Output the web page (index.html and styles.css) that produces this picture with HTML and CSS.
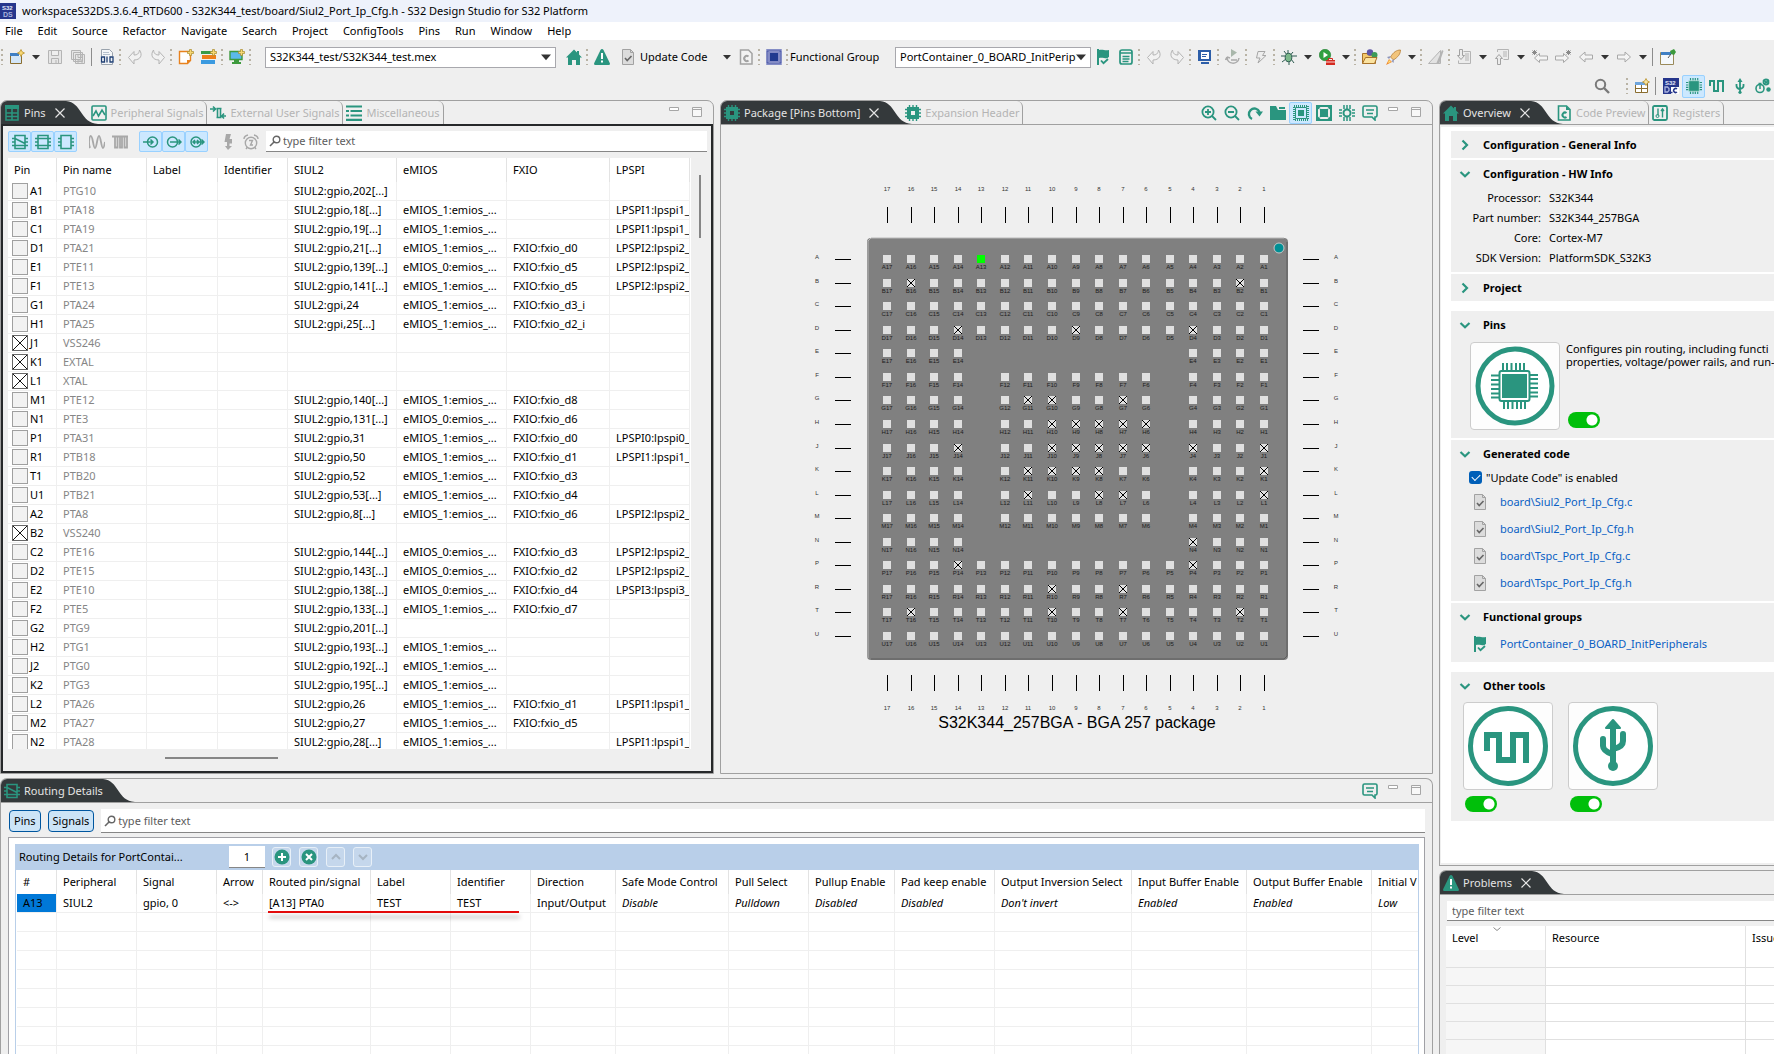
FILE: index.html
```html
<!DOCTYPE html>
<html lang="en">
<head>
<meta charset="utf-8">
<title>S32 Design Studio for S32 Platform</title>
<link rel="stylesheet" href="styles.css">
</head>
<body>
<svg class="defs" aria-hidden="true">
  <symbol id="new" viewBox="0 0 16 16"><path fill="#fff" stroke="#8a6d2f" d="M1.500 4.500h11v10h-11z"/><path fill="#3f7fc4" d="M1 4h9v3H1z"/><path fill="#d3e6f8" d="M2 7h10v7H2z"/><path fill="#f7d774" stroke="#b8902c" stroke-width=".8" d="M12 .5l1.200 2.300 2.300 1.200-2.300 1.200L12 7.500l-1.200-2.300L8.500 4l2.300-1.200z"/></symbol>
  <symbol id="save" viewBox="0 0 16 16"><path fill="#e6e6e6" stroke="#b4b4b4" d="M1.500 1.500h13v13h-13zM4.500 1.500v5h7v-5M4.500 14.500v-5h7v5M9 11v3"/></symbol>
  <symbol id="saveall" viewBox="0 0 16 16"><path fill="#e6e6e6" stroke="#b4b4b4" d="M1.500 1.500h9v9h-9zM3.500 3.500h9v9h-9zM5.500 5.500h9v9h-9zM8 5.500v3h4v-3M8 14v-3h4v3"/></symbol>
  <symbol id="bin" viewBox="0 0 16 16"><path fill="#f4f6f8" stroke="#9aa3ad" d="M2.500 .5h8l3 3v12h-11z"/><path stroke="#b5c0cc" d="M4 3.500h6M4 5.500h7"/><path fill="#f4f6f8" d="M1 7h14v7H1z"/><path fill="none" stroke="#1f3f73" stroke-width="1.300" d="M2.500 8h3v5h-3zM8 7.500v6M11 8h3v5h-3z"/></symbol>
  <symbol id="undo" viewBox="0 0 16 16"><path fill="#f2f2f2" stroke="#b4b4b4" d="M1.500 8.500l5.500-6v3.500c3 0 5-1 5.500-5 3.500 5 1 10-5.500 10v4z"/></symbol>
  <symbol id="redo" viewBox="0 0 16 16"><path fill="#f2f2f2" stroke="#b4b4b4" d="M14.500 8.500l-5.500-6v3.500c-3 0-5-1-5.500-5-3.500 5-1 10 5.500 10v4z"/></symbol>
  <symbol id="newfile" viewBox="0 0 16 16"><path fill="#fff" stroke="#e8821e" stroke-width="1.400" d="M1.500 2.500h11v9l-3 3h-8z"/><path fill="#e8821e" d="M9 15v-4h4z"/><path fill="#f7d774" stroke="#a88a2c" stroke-width=".7" d="M11.500 .5h2v2h2v2h-2v2h-2v-2h-2v-2h2z"/></symbol>
  <symbol id="stack" viewBox="0 0 16 16"><path fill="#3a9a48" d="M0 2h13v3H0z"/><path fill="#ee7d1a" d="M1 6h14v4H1z"/><path fill="#3b9ae0" d="M0 11h14v4H0z"/><path fill="#f7d774" stroke="#a88a2c" stroke-width=".7" d="M11.500 .5h2v2h2v2h-2v2h-2v-2h-2v-2h2z"/></symbol>
  <symbol id="screen" viewBox="0 0 16 16"><path fill="#5bb9ea" stroke="#3d9a3d" stroke-width="1.400" d="M1 2.500h12v8H1z"/><path fill="#3d9a3d" d="M5 11h5v2h2v2H3v-2h2z"/><path fill="#f7d774" stroke="#a88a2c" stroke-width=".7" d="M11.500 .5h2v2h2v2h-2v2h-2v-2h-2v-2h2z"/></symbol>
  <symbol id="home" viewBox="0 0 16 16"><path fill="#2a957f" d="M8 .5l3 3V2h2v3.500L16 8.500H14V16h-4v-5H6v5H2V8.500H0z"/></symbol>
  <symbol id="warn" viewBox="0 0 16 16"><path fill="#2a957f" d="M8 0q1 0 1.600 1.200L16 14.500q0 1.500-1.300 1.500H1.300Q0 16 0 14.500L6.400 1.200Q7 0 8 0z"/><path fill="#fff" d="M7 4h2v6H7zM7 11.500h2v2H7z"/></symbol>
  <symbol id="doccheck" viewBox="0 0 16 16"><path fill="#dcdcdc" stroke="#a2a2a2" d="M2.500 .5h8l3 3v12h-11z"/><path fill="none" stroke="#a2a2a2" d="M10.500 .5v3h3"/><path fill="none" stroke="#666" stroke-width="1.600" d="M5 9l2.200 2.500L11.500 7"/></symbol>
  <symbol id="docc" viewBox="0 0 16 16"><path fill="#f2f2f2" stroke="#a2a2a2" stroke-width="1.500" d="M2.500 1h8l3.500 3.500V15H2.500z"/><path fill="none" stroke="#a2a2a2" stroke-width="2" d="M10.500 7.500a2.600 2.600 0 1 0 0 4"/></symbol>
  <symbol id="cfile" viewBox="0 0 16 16"><path fill="none" stroke="#2a957f" stroke-width="1.600" d="M2.500 1h8L14 4.500V15H2.500z"/><path fill="#2a957f" d="M10 1v4h4z"/><path fill="none" stroke="#2a957f" stroke-width="2" d="M10.500 8a2.500 2.500 0 1 0 0 4"/></symbol>
  <symbol id="bluechip" viewBox="0 0 16 16"><path fill="#9da3d0" d="M0 0h16v16H0z"/><path fill="none" stroke="#3f4ca3" stroke-dasharray="1 1" stroke-width="2" d="M1.500 1.500h13v13h-13z"/><path fill="#8289c4" d="M3 3h10v10H3z"/><path fill="#213a8f" d="M4 4h8v8H4z"/></symbol>
  <symbol id="flag" viewBox="0 0 16 16"><path fill="#2a957f" d="M2 0h2v1c4-1 6 1 10 0v8c-4 1-6-1-10 0v7H2z"/><path fill="none" stroke="#efefef" stroke-width="3" d="M6 11l3 3 6-5"/><path fill="none" stroke="#2a957f" stroke-width="1.800" d="M6 11.500l2.500 2.700L13 10"/></symbol>
  <symbol id="db" viewBox="0 0 16 16"><path fill="none" stroke="#2a957f" stroke-width="1.700" d="M4 1h8q2 0 2 2v10q0 2-2 2H4q-2 0-2-2V3q0-2 2-2zM2 4h12M4.500 7.500h7M4.500 10h7M4.500 12.500h6"/></symbol>
  <symbol id="console" viewBox="0 0 16 16"><path fill="#2d5ea8" d="M1 1h13v11H1zM4 13h8v2H4z"/><path fill="#fff" d="M4 3h8v7H4z"/><path stroke="#2d5ea8" d="M5 5.500h5M5 7.500h4"/></symbol>
  <symbol id="refresh" viewBox="0 0 16 16"><path fill="#a9b7ab" d="M6 0l6 3.500L6 8z"/><path fill="none" stroke="#a9a9a9" stroke-width="1.500" d="M2 8c0 8 11 8 12 1M2 8L.5 11M2 8l3 1M6 11h6"/></symbol>
  <symbol id="flash" viewBox="0 0 16 16"><path fill="#eee" stroke="#a6a6a6" d="M5 2.500h7L9.500 6.500H13L5 14l2-5H3.500z"/></symbol>
  <symbol id="bug" viewBox="0 0 16 16"><path stroke="#2c5a50" d="M3 2l3 4M12 3L9.500 6M0 7h4M11 7h5M1 13l4-3M13 14l-3-4M7 1v4M8 12v4"/><ellipse cx="7.500" cy="8.500" rx="3.300" ry="4.200" fill="#7bb88a" stroke="#2c5a50"/></symbol>
  <symbol id="run" viewBox="0 0 16 16"><circle cx="6" cy="6" r="5.700" fill="#30a040" stroke="#1f7d2e" stroke-width=".6"/><path fill="#fff" d="M4.500 3l4.500 3-4.500 3z"/><path fill="#d42a20" d="M7 11h9v5H7z"/><path fill="none" stroke="#d42a20" d="M9.500 11V9.500h4V11"/><path stroke="#fff" stroke-width=".8" d="M7 13h9"/></symbol>
  <symbol id="folder" viewBox="0 0 16 16"><path fill="#f4c96b" stroke="#a8722a" d="M.5 4.500h5l1 1.500h7v8.500H.5z"/><circle cx="8" cy="3.500" r="3.200" fill="#5f56a8"/><circle cx="12.500" cy="6" r="3" fill="#3d9a58"/><path fill="#fbe3a0" stroke="#a8722a" d="M.5 14.500l3-6H15l-2.500 6z"/></symbol>
  <symbol id="rocket" viewBox="0 0 16 16"><path fill="#f2c57c" stroke="#b87d33" stroke-width=".8" d="M15.500 1c-4 0-7 2-10 7l3 3c4.500-3 7-6 7-10z"/><path fill="#8c94b8" d="M6 7L2 8l2 2zM9 10l-.5 4L6.500 12z"/><path fill="#f28a2a" d="M4 10l3 3-6 3z"/><path fill="#ffe27a" d="M4 11l2 2-3 1z"/></symbol>
  <symbol id="blade" viewBox="0 0 16 16"><path fill="#e2e2e2" stroke="#b4b4b4" d="M12.500 1.500v13h-12z"/><path fill="#b4b4b4" d="M14 1l1.500 1L11 15H8z"/></symbol>
  <symbol id="nextann" viewBox="0 0 16 16"><path fill="#ececec" stroke="#b4b4b4" d="M7.500 2.500h7v12h-12v-3M9 5h4M9 7h4M9 9h4M9 11h4"/><path fill="#ececec" stroke="#a2a2a2" d="M3.500 .5h3v6h2L5 10.500 1.500 6.500h2z"/></symbol>
  <symbol id="prevann" viewBox="0 0 16 16"><path fill="#ececec" stroke="#b4b4b4" d="M3.500 3V.5h11v10h-5M9 3h4M9 5h4M9 7h4"/><path fill="#ececec" stroke="#a2a2a2" d="M3.500 15.500h3v-6h2L5 5.500 1.500 9.500h2z"/></symbol>
  <symbol id="backstar" viewBox="0 0 16 16"><path fill="#f4f4f4" stroke="#a8a8a8" d="M2.500 9l5-4.500v2.500h8v4h-8v2.500z"/><path stroke="#8a8a8a" d="M0 3.500h5M2.500 1v5M.5 1.500l4 4M4.500 1.500l-4 4"/></symbol>
  <symbol id="fwdstar" viewBox="0 0 16 16"><path fill="#f4f4f4" stroke="#a8a8a8" d="M13.500 9l-5-4.500v2.500h-8v4h8v2.500z"/><path stroke="#8a8a8a" d="M11 3.500h5M13.500 1v5M11.500 1.500l4 4M15.500 1.500l-4 4"/></symbol>
  <symbol id="back" viewBox="0 0 16 16"><path fill="#f4f4f4" stroke="#a8a8a8" d="M1.500 8l5.500-5v3h7.500v4H7v3z"/></symbol>
  <symbol id="fwd" viewBox="0 0 16 16"><path fill="#f4f4f4" stroke="#a8a8a8" d="M14.500 8L9 3v3H1.500v4H9v3z"/></symbol>
  <symbol id="pinned" viewBox="0 0 16 16"><path fill="#f4f8fc" stroke="#9a8a5a" d="M.5 3.500h13v12H.5z"/><path fill="#3f7fc4" d="M1 3h10v3H1z"/><path fill="#3d9a3d" d="M10 2l4-2 2 3-2 3-3-1z"/><path stroke="#555" d="M11 5L8 9"/></symbol>
  <symbol id="search" viewBox="0 0 16 16"><circle cx="6.500" cy="6.500" r="4.700" fill="none" stroke="#7a7a7a" stroke-width="2"/><path stroke="#7a7a7a" stroke-width="2.400" d="M10 10l5 5"/></symbol>
  <symbol id="lens" viewBox="0 0 12 12"><circle cx="7.500" cy="4.500" r="3.300" fill="none" stroke="#666" stroke-width="1.400"/><path stroke="#666" stroke-width="1.600" d="M5 7L1 11"/></symbol>
  <symbol id="persp" viewBox="0 0 16 16"><path fill="#fff" stroke="#8a6d2f" d="M1.500 4.500h12v10h-12zM7.500 7v7M1.500 10.500h12"/><path fill="#6fa5dc" d="M1 4h10v3H1z"/><path fill="#f7e3a0" stroke="#b8902c" stroke-width=".8" d="M12 .5l1.200 2.300 2.300 1.200-2.300 1.200L12 7.500l-1.200-2.300L8.500 4l2.300-1.200z"/></symbol>
  <symbol id="s32" viewBox="0 0 16 16"><path fill="#26368c" d="M0 0h16v16H0z"/><text x="2" y="7" font-size="6" font-weight="700" fill="#e4e8fa" font-family="Liberation Sans">S32</text><text x="3" y="14" font-size="7" font-weight="700" fill="#a9b3de" font-family="Liberation Sans">DS</text></symbol>
  <symbol id="s32c" viewBox="0 0 16 16"><path fill="#26368c" d="M0 0h16v16H0z"/><text x="2" y="7" font-size="6" font-weight="700" fill="#e4e8fa" font-family="Liberation Sans">S32</text><path fill="none" stroke="#a9b3de" stroke-width="1.300" d="M2 9h2.500l1.500 1.500v2L4.500 14H2z"/><path fill="#fff" d="M8 9h8v7H8z"/><path fill="none" stroke="#26368c" stroke-width="1.500" d="M14 11a2 2 0 1 0 0 3M8 14.500h1.500"/></symbol>
  <symbol id="chip" viewBox="0 0 16 16"><path stroke="#2a957f" stroke-width="1.200" d="M4.500 0v16M7 0v16M9.300 0v16M11.700 0v16M0 4.500h16M0 7h16M0 9.300h16M0 11.700h16"/><path fill="#2a957f" stroke="#bfe3da" stroke-width=".8" d="M2.700 2.700h10.600v10.600H2.700z"/></symbol>
  <symbol id="chiphole" viewBox="0 0 16 16"><path stroke="#2a957f" stroke-width="1.400" d="M4.500 0v16M8 0v16M11.500 0v16M0 4.500h16M0 8h16M0 11.500h16"/><path fill="#2a957f" d="M2 2h12v12H2z"/><path fill="#efefef" d="M6 6h4v4H6z"/></symbol>
  <symbol id="chipdark" viewBox="0 0 16 16"><path stroke="#2a957f" stroke-width="1.400" d="M4.500 0v16M8 0v16M11.500 0v16M0 4.500h16M0 8h16M0 11.500h16"/><path fill="#2a957f" d="M2 2h12v12H2z"/><path fill="#34393b" d="M6 6h4v4H6z"/></symbol>
  <symbol id="wave" viewBox="0 0 16 16"><path fill="none" stroke="#2a957f" stroke-width="2" d="M1 8V3h4v10h4V3h5v11"/></symbol>
  <symbol id="usb" viewBox="0 0 16 16"><path fill="#2a957f" d="M8 0l2.500 4h-5z"/><path fill="none" stroke="#2a957f" stroke-width="1.800" d="M8 3v11M4.500 6v2q0 2 3.500 3.500M11.500 6v2q0 2-3.500 3"/><circle cx="8" cy="14.300" r="1.600" fill="#2a957f"/></symbol>
  <symbol id="gears" viewBox="0 0 16 16"><circle cx="5" cy="10.500" r="4" fill="none" stroke="#2a957f" stroke-width="1.600"/><circle cx="11" cy="4" r="2.500" fill="none" stroke="#2a957f" stroke-width="1.800"/><circle cx="13.500" cy="11.500" r="2.200" fill="#2a957f"/><path stroke="#2a957f" stroke-width="1.500" d="M5 7v4M3.500 5.500h3M8 2l6 4M14 2L9 6"/></symbol>
  <symbol id="grid" viewBox="0 0 16 16"><path fill="none" stroke="#2a957f" stroke-width="1.600" d="M2 1h12v14H2zM8 4v11M2 8h12M2 11.500h12"/><path fill="#2a957f" d="M1 0h14v4H1z"/></symbol>
  <symbol id="scope" viewBox="0 0 16 16"><rect x="1" y="1" width="14" height="14" rx="1" fill="none" stroke="#2a957f" stroke-width="1.600"/><path fill="none" stroke="#2a957f" stroke-width="1.600" d="M2 11l3-5 2.500 5L11 5l3 5"/></symbol>
  <symbol id="ext" viewBox="0 0 16 16"><path fill="none" stroke="#2a957f" stroke-width="1.600" d="M0 4h5M3 1.500L5.500 4 3 6.500M7.500 3v10M10.500 3v10M6.500 3.500h5M6.500 12.500h5M16 11h-4M14 8.500L11.800 11 14 13.500"/></symbol>
  <symbol id="list" viewBox="0 0 16 16"><path stroke="#2a957f" stroke-width="2.200" d="M0 1.500h16M0 6h3M4.500 6H16M0 10.500h3M4.500 10.500H16M0 14.800h16"/></symbol>
  <symbol id="route" viewBox="0 0 16 16"><path fill="none" stroke="#2a957f" stroke-width="1.600" d="M3 1.500h10v13H3zM0 4.500h3M0 8h3M0 11.500h3M13 4.500h3M13 8h3M13 11.500h3M3 4.500l10 5M3 11.500h10"/></symbol>
  <symbol id="route2" viewBox="0 0 16 16"><path fill="none" stroke="#2a957f" stroke-width="1.600" d="M3 1.500h10v13H3zM0 4.500h16M0 11.500h16M0 8h3M13 8h3"/></symbol>
  <symbol id="route3" viewBox="0 0 16 16"><path fill="none" stroke="#2a957f" stroke-width="1.600" d="M3 1.500h10v13H3zM0 4.500h3M0 8h3M0 11.500h3M13 4.500h3M13 8h3M13 11.500h3"/></symbol>
  <symbol id="sine" viewBox="0 0 16 16"><path fill="none" stroke="#a8a8a8" stroke-width="1.800" d="M0 8q.5-6 1.700-6T4 8t2 6 2-6 2-6 2 6 2 6 2-6M0 8q0 4 1 6"/></symbol>
  <symbol id="pulse" viewBox="0 0 16 16"><path fill="none" stroke="#a8a8a8" stroke-width="1.800" d="M0 2.500h16M3 2.500v11h2.500v-11M8 2.500v11h2v-11M12.500 2.500v11H15v-11"/></symbol>
  <symbol id="cin" viewBox="0 0 16 16"><circle cx="9.500" cy="8" r="5" fill="none" stroke="#2a957f" stroke-width="1.500"/><path fill="none" stroke="#2a957f" stroke-width="1.500" d="M0 8h10M7.500 5.500L10 8l-2.500 2.500"/></symbol>
  <symbol id="cout" viewBox="0 0 16 16"><circle cx="6.500" cy="8" r="5" fill="none" stroke="#2a957f" stroke-width="1.500"/><path fill="none" stroke="#2a957f" stroke-width="1.500" d="M4 8h11M12.500 5.500L15 8l-2.500 2.500"/></symbol>
  <symbol id="cbi" viewBox="0 0 16 16"><circle cx="7" cy="8" r="5" fill="none" stroke="#2a957f" stroke-width="1.500"/><path fill="none" stroke="#2a957f" stroke-width="1.500" d="M4 8h11M12.500 5.500L15 8l-2.500 2.500M6 6L4 8l2 2M8 6l2 2-2 2"/></symbol>
  <symbol id="bolt" viewBox="0 0 16 16"><path fill="#a8a8a8" d="M6 0h5L9.500 5H12v4.500H9.500V12H12l-4 4-3-4h2V8H4.500z"/></symbol>
  <symbol id="alarm" viewBox="0 0 16 16"><circle cx="8" cy="9" r="5.700" fill="none" stroke="#a8a8a8" stroke-width="1.400"/><path fill="none" stroke="#a8a8a8" stroke-width="1.400" d="M1 5q0-3 4-4M15 5q0-3-4-4M6 6.500h3.500L7.500 11H10M3 15l1.500-2M13 15l-1.500-2"/></symbol>
  <symbol id="zin" viewBox="0 0 16 16"><circle cx="7" cy="7" r="5.600" fill="none" stroke="#2a957f" stroke-width="1.800"/><path stroke="#2a957f" stroke-width="1.800" d="M7 4v6M4 7h6M11 11l4 4"/></symbol>
  <symbol id="zout" viewBox="0 0 16 16"><circle cx="7" cy="7" r="5.600" fill="none" stroke="#2a957f" stroke-width="1.800"/><path stroke="#2a957f" stroke-width="1.800" d="M4 7h6M11 11l4 4"/></symbol>
  <symbol id="rotate" viewBox="0 0 16 16"><path fill="none" stroke="#2a957f" stroke-width="2.400" d="M5 14A5.500 5.500 0 1 1 12.500 7"/><path fill="#2a957f" d="M8.500 6.500H16l-3.500 5z"/></symbol>
  <symbol id="fold" viewBox="0 0 16 16"><path fill="#2a957f" d="M0 1h6l2 4h8v10H0z"/><path fill="#2a957f" d="M9 2h6v2H9z"/></symbol>
  <symbol id="pkg" viewBox="0 0 16 16"><path fill="none" stroke="#2a957f" stroke-dasharray="1 1" stroke-width="2" d="M1 1h14v14H1z"/><path fill="none" stroke="#2a957f" d="M2.500 2.500h11v11h-11z"/><path fill="#2a957f" d="M5 5h6v6H5z"/></symbol>
  <symbol id="pkg2" viewBox="0 0 16 16"><path fill="none" stroke="#2a957f" stroke-width="2" d="M1 1h14v14H1zM1 1l4 4M15 1l-4 4M1 15l4-4M15 15l-4-4"/><path fill="#2a957f" d="M4 4h8v8H4z"/><path fill="none" stroke="#efefef" stroke-width=".8" d="M3.500 3.500h9v9h-9z"/></symbol>
  <symbol id="pkg3" viewBox="0 0 16 16"><path fill="none" stroke="#2a957f" stroke-width="1.500" d="M5 0v4M8 0v4M11 0v4M5 12v4M8 12v4M11 12v4M0 5h3M0 8h3M0 11h3M13 5h3M13 8h3M13 11h3"/><circle cx="8" cy="8" r="3.500" fill="none" stroke="#2a957f" stroke-width="2"/></symbol>
  <symbol id="note" viewBox="0 0 16 16"><path fill="none" stroke="#2a957f" stroke-width="1.600" d="M2.500 1h11q1.500 0 1.500 1.500v8q0 1.500-1.500 1.500H13v3l-3-3H2.500Q1 12 1 10.500v-8Q1 1 2.500 1zM4 5h8M5 8.500h6"/></symbol>
  <symbol id="min" viewBox="0 0 16 16"><path fill="#fff" stroke="#a6a6a6" d="M3.500 2.500h9v3h-9z"/></symbol>
  <symbol id="max" viewBox="0 0 16 16"><path fill="#f8f8f8" stroke="#a6a6a6" d="M3.500 2.500h9v9h-9zM3.500 4.500h9"/></symbol>
  <symbol id="reg" viewBox="0 0 16 16"><rect x="1" y="1" width="14" height="14" rx="1.500" fill="none" stroke="#2a957f" stroke-width="1.800"/><path fill="none" stroke="#2a957f" stroke-width="1.400" d="M6 3.500v7M10.500 5v7.500M9 6l1.500-2L12 6"/><circle cx="5.500" cy="11" r="1.500" fill="none" stroke="#2a957f"/></symbol>
  <symbol id="x" viewBox="0 0 12 12"><path stroke="#e4e4e4" stroke-width="1.200" d="M1.500 1.500l9 9M10.500 1.500l-9 9"/></symbol>
  <symbol id="caret" viewBox="0 0 8 8"><path fill="#333" d="M0 2h8L4 6.500z"/></symbol>
  <symbol id="right" viewBox="0 0 12 12"><path fill="none" stroke="#2a957f" stroke-width="2.200" d="M3.500 1.500L8 6l-4.500 4.500"/></symbol>
  <symbol id="down" viewBox="0 0 12 12"><path fill="none" stroke="#2a957f" stroke-width="2.200" d="M1.500 4L6 8.200 10.500 4"/></symbol>
  <symbol id="curve" viewBox="0 0 32 23"><path fill="#34393b" d="M0 0C16 1 14 22 32 23H0z"/></symbol>
  <symbol id="addb" viewBox="0 0 16 16"><circle cx="8" cy="8" r="7.500" fill="#2a957f"/><path stroke="#fff" stroke-width="2" d="M8 4v8M4 8h8"/></symbol>
  <symbol id="delb" viewBox="0 0 16 16"><circle cx="8" cy="8" r="7.500" fill="#2a957f"/><path stroke="#fff" stroke-width="2" d="M5 5l6 6M11 5l-6 6"/></symbol>
  <symbol id="upb" viewBox="0 0 16 16"><path fill="none" stroke="#a6b4c2" stroke-width="2" d="M4 10l4-4 4 4"/></symbol>
  <symbol id="downb" viewBox="0 0 16 16"><path fill="none" stroke="#a6b4c2" stroke-width="2" d="M4 6l4 4 4-4"/></symbol>
  <symbol id="sort" viewBox="0 0 8 4"><path fill="none" stroke="#888" d="M.5 .5L4 3.500 7.500 .5"/></symbol>
  <symbol id="bigchip" viewBox="0 0 84 84"><circle cx="42" cy="42" r="37" fill="#fff" stroke="#2a957f" stroke-width="5"/><path stroke="#2a957f" stroke-width="2" d="M30 19v8M34 19v8M38.500 19v8M43 19v8M47 19v8M51 19v8M31 57v8M35 57v8M39.500 57v8M44 57v8M48 57v8M52 57v8M18 31.500h8M18 36h8M18 40.500h8M18 45h8M18 49.500h8M18 53.500h8M57 31h8M57 35h8M57 39.500h8M57 44h8M57 48.500h8M57 52.500h8"/><rect x="26.500" y="27" width="30" height="30" rx="2" fill="#fff" stroke="#2a957f" stroke-width="2"/><path fill="#2a957f" d="M29 30h25v24H29z"/></symbol>
  <symbol id="bigwave" viewBox="0 0 84 84"><circle cx="42" cy="42" r="37.500" fill="#fff" stroke="#2a957f" stroke-width="5"/><path fill="none" stroke="#2a957f" stroke-width="6" d="M21 47V31h12v25h14V31h13v28"/></symbol>
  <symbol id="bigusb" viewBox="0 0 84 84"><circle cx="42" cy="42" r="37.500" fill="#fff" stroke="#2a957f" stroke-width="5"/><path fill="#2a957f" stroke="#2a957f" stroke-width="2" stroke-linejoin="round" d="M42 16l7 8h-14z"/><path fill="none" stroke="#2a957f" stroke-width="6" stroke-linecap="round" d="M42 22v36M32 35v7q0 5 10 8.500M52 30v7q0 6-10 8"/><circle cx="42" cy="62" r="5" fill="#2a957f"/></symbol>
</svg>

<header class="titlebar"><svg class="i"><use href="#s32"/></svg><h1>workspaceS32DS.3.6.4_RTD600 - S32K344_test/board/Siul2_Port_Ip_Cfg.h - S32 Design Studio for S32 Platform</h1></header>
<nav class="menubar"><button>File</button><button>Edit</button><button>Source</button><button>Refactor</button><button>Navigate</button><button>Search</button><button>Project</button><button>ConfigTools</button><button>Pins</button><button>Run</button><button>Window</button><button>Help</button></nav>

<div class="toolbar">
  <i class="grip"></i><button aria-label="New"><svg class="i"><use href="#new"/></svg></button><button class="drop" aria-label="New menu"><svg><use href="#caret"/></svg></button><button aria-label="Save"><svg class="i"><use href="#save"/></svg></button><button aria-label="Save all"><svg class="i"><use href="#saveall"/></svg></button><i class="sep"></i><button aria-label="Binary"><svg class="i"><use href="#bin"/></svg></button><i class="grip"></i><button aria-label="Undo"><svg class="i"><use href="#undo"/></svg></button><button aria-label="Redo"><svg class="i"><use href="#redo"/></svg></button><i class="grip"></i><button aria-label="New project"><svg class="i"><use href="#newfile"/></svg></button><button aria-label="New library"><svg class="i"><use href="#stack"/></svg></button><i class="grip"></i><button aria-label="New screen"><svg class="i"><use href="#screen"/></svg></button><i class="grip"></i>
  <span class="combo config"><select aria-label="Configuration"><option>S32K344_test/S32K344_test.mex</option></select><svg><use href="#caret"/></svg></span>
  <button aria-label="Home"><svg class="i"><use href="#home"/></svg></button><i class="grip"></i><button aria-label="Problems"><svg class="i"><use href="#warn"/></svg></button><button class="update"><svg class="i"><use href="#doccheck"/></svg>Update Code</button><button class="drop" aria-label="Update menu"><svg><use href="#caret"/></svg></button><button aria-label="Code preview"><svg class="i"><use href="#docc"/></svg></button><i class="grip"></i><button aria-label="Processor"><svg class="i"><use href="#bluechip"/></svg></button><i class="grip"></i>
  <label class="grouplabel" for="fgroup">Functional Group</label>
  <span class="combo group"><select id="fgroup"><option>PortContainer_0_BOARD_InitPeripherals</option></select><svg><use href="#caret"/></svg></span>
  <button aria-label="Flag"><svg class="i"><use href="#flag"/></svg></button><button aria-label="Groups"><svg class="i"><use href="#db"/></svg></button><i class="grip"></i><button aria-label="Undo edit"><svg class="i"><use href="#undo"/></svg></button><button aria-label="Redo edit"><svg class="i"><use href="#redo"/></svg></button><i class="grip"></i><button aria-label="Console"><svg class="i"><use href="#console"/></svg></button><i class="grip"></i><button aria-label="Restart"><svg class="i"><use href="#refresh"/></svg></button><i class="grip"></i><button aria-label="Flash"><svg class="i"><use href="#flash"/></svg></button><i class="grip"></i><button aria-label="Debug"><svg class="i"><use href="#bug"/></svg></button><button class="drop" aria-label="Debug menu"><svg><use href="#caret"/></svg></button><button aria-label="Run"><svg class="i"><use href="#run"/></svg></button><button class="drop" aria-label="Run menu"><svg><use href="#caret"/></svg></button><i class="grip"></i><button aria-label="Open type"><svg class="i"><use href="#folder"/></svg></button><button aria-label="Launch"><svg class="i"><use href="#rocket"/></svg></button><button class="drop" aria-label="Launch menu"><svg><use href="#caret"/></svg></button><i class="grip"></i><button aria-label="Mark"><svg class="i"><use href="#blade"/></svg></button><i class="grip"></i><button aria-label="Next annotation"><svg class="i"><use href="#nextann"/></svg></button><button class="drop" aria-label="Next menu"><svg><use href="#caret"/></svg></button><button aria-label="Previous annotation"><svg class="i"><use href="#prevann"/></svg></button><button class="drop" aria-label="Previous menu"><svg><use href="#caret"/></svg></button><button aria-label="Last edit"><svg class="i"><use href="#backstar"/></svg></button><button aria-label="Next edit"><svg class="i"><use href="#fwdstar"/></svg></button><button aria-label="Back"><svg class="i"><use href="#back"/></svg></button><button class="drop" aria-label="Back menu"><svg><use href="#caret"/></svg></button><button aria-label="Forward"><svg class="i"><use href="#fwd"/></svg></button><button class="drop" aria-label="Forward menu"><svg><use href="#caret"/></svg></button><i class="sep"></i><button aria-label="Pin editor"><svg class="i"><use href="#pinned"/></svg></button>
</div>
<div class="toolbar perspectives">
  <button class="find" aria-label="Search"><svg class="i"><use href="#search"/></svg></button><i class="grip"></i><button aria-label="Open perspective"><svg class="i"><use href="#persp"/></svg></button><i class="sep"></i><button aria-label="C/C++"><svg class="i"><use href="#s32c"/></svg></button><button class="on" aria-label="Pins tool"><svg class="i"><use href="#chip"/></svg></button><button aria-label="Clocks tool"><svg class="i"><use href="#wave"/></svg></button><button aria-label="Peripherals tool"><svg class="i"><use href="#usb"/></svg></button><button aria-label="Settings tool"><svg class="i"><use href="#gears"/></svg></button>
</div>

<main class="workbench">
  <section class="panel pins focused">
    <div class="tabs">
      <button class="tab active"><svg class="i"><use href="#grid"/></svg>Pins<svg class="x"><use href="#x"/></svg></button><svg class="curve"><use href="#curve"/></svg>
      <button class="tab"><svg class="i"><use href="#scope"/></svg>Peripheral Signals</button>
      <button class="tab"><svg class="i"><use href="#ext"/></svg>External User Signals</button>
      <button class="tab"><svg class="i"><use href="#list"/></svg>Miscellaneous</button>
      <span class="tools"><button aria-label="Minimize"><svg class="i"><use href="#min"/></svg></button><button aria-label="Maximize"><svg class="i"><use href="#max"/></svg></button></span>
    </div>
    <div class="body">
      <div class="filterbar">
        <span class="set"><button class="on" aria-label="Routed"><svg class="i"><use href="#route"/></svg></button><button class="on" aria-label="Routable"><svg class="i"><use href="#route2"/></svg></button><button class="on" aria-label="Dedicated"><svg class="i"><use href="#route3"/></svg></button></span>
        <span class="set"><button aria-label="Analog"><svg class="i"><use href="#sine"/></svg></button><button aria-label="Digital"><svg class="i"><use href="#pulse"/></svg></button></span>
        <span class="set"><button class="on" aria-label="Inputs"><svg class="i"><use href="#cin"/></svg></button><button class="on" aria-label="Outputs"><svg class="i"><use href="#cout"/></svg></button><button class="on" aria-label="Bidirectional"><svg class="i"><use href="#cbi"/></svg></button></span>
        <span class="set last"><button aria-label="Power"><svg class="i"><use href="#bolt"/></svg></button><button aria-label="Timers"><svg class="i"><use href="#alarm"/></svg></button></span>
        <label class="filter"><svg><use href="#lens"/></svg><input type="text" placeholder="type filter text" aria-label="Filter pins"></label>
      </div>
      <div class="pinlist">
        <div class="clip"><table class="grid pintable">
          <colgroup><col class="c49"><col class="c90"><col class="c71"><col class="c70"><col class="c109"><col class="c110"><col class="c103"><col class="c80"></colgroup>
          <thead><tr><th>Pin</th><th>Pin name</th><th>Label</th><th>Identifier</th><th>SIUL2</th><th>eMIOS</th><th>FXIO</th><th>LPSPI</th></tr></thead>
          <tbody id="pins"></tbody>
        </table></div>
        <div class="vbar"></div>
      </div>
      <div class="hbar"></div>
    </div>
  </section>

  <section class="panel package">
    <div class="tabs">
      <button class="tab active"><svg class="i"><use href="#chipdark"/></svg>Package [Pins Bottom]<svg class="x"><use href="#x"/></svg></button><svg class="curve"><use href="#curve"/></svg>
      <button class="tab"><svg class="i"><use href="#chiphole"/></svg>Expansion Header</button>
      <span class="tools"><button aria-label="Zoom in"><svg class="i"><use href="#zin"/></svg></button><button aria-label="Zoom out"><svg class="i"><use href="#zout"/></svg></button><button aria-label="Rotate"><svg class="i"><use href="#rotate"/></svg></button><button aria-label="Switch package"><svg class="i"><use href="#fold"/></svg></button><button class="on" aria-label="Bottom view"><svg class="i"><use href="#pkg"/></svg></button><button aria-label="Top view"><svg class="i"><use href="#pkg2"/></svg></button><button aria-label="Peripheral view"><svg class="i"><use href="#pkg3"/></svg></button><button aria-label="Legend"><svg class="i"><use href="#note"/></svg></button><button aria-label="Minimize"><svg class="i"><use href="#min"/></svg></button><button aria-label="Maximize"><svg class="i"><use href="#max"/></svg></button></span>
    </div>
    <div class="body"><svg class="bga" id="bga" viewBox="0 0 711 648" preserveAspectRatio="xMidYMid meet"></svg></div>
  </section>

  <section class="panel overview">
    <div class="tabs">
      <button class="tab active"><svg class="i"><use href="#home"/></svg>Overview<svg class="x"><use href="#x"/></svg></button><svg class="curve"><use href="#curve"/></svg>
      <button class="tab"><svg class="i"><use href="#cfile"/></svg>Code Preview</button>
      <button class="tab"><svg class="i"><use href="#reg"/></svg>Registers</button>
    </div>
    <div class="body">
      <div class="card"><h2><svg><use href="#right"/></svg>Configuration - General Info</h2></div>
      <div class="card"><h2><svg><use href="#down"/></svg>Configuration - HW Info</h2>
        <dl><dt>Processor:</dt><dd>S32K344</dd><dt>Part number:</dt><dd>S32K344_257BGA</dd><dt>Core:</dt><dd>Cortex-M7</dd><dt>SDK Version:</dt><dd>PlatformSDK_S32K3</dd></dl></div>
      <div class="card"><h2><svg><use href="#right"/></svg>Project</h2></div>
      <div class="card apart"><h2><svg><use href="#down"/></svg>Pins</h2>
        <div class="pinstool"><button class="tile" aria-label="Pins tool"><svg><use href="#bigchip"/></svg></button>
          <div class="about"><p>Configures pin routing, including functi<br>properties, voltage/power rails, and run-</p><input class="switch" type="checkbox" role="switch" checked aria-label="Pins enabled"></div></div></div>
      <div class="card"><h2><svg><use href="#down"/></svg>Generated code</h2>
        <label class="enabled"><input type="checkbox" checked>"Update Code" is enabled</label>
        <ul class="files">
          <li><svg class="i"><use href="#doccheck"/></svg><a href="#">board\Siul2_Port_Ip_Cfg.c</a></li>
          <li><svg class="i"><use href="#doccheck"/></svg><a href="#">board\Siul2_Port_Ip_Cfg.h</a></li>
          <li><svg class="i"><use href="#doccheck"/></svg><a href="#">board\Tspc_Port_Ip_Cfg.c</a></li>
          <li><svg class="i"><use href="#doccheck"/></svg><a href="#">board\Tspc_Port_Ip_Cfg.h</a></li>
        </ul></div>
      <div class="card"><h2><svg><use href="#down"/></svg>Functional groups</h2>
        <ul class="files groups"><li><svg class="i"><use href="#flag"/></svg><a href="#">PortContainer_0_BOARD_InitPeripherals</a></li></ul></div>
      <div class="card apart"><h2><svg><use href="#down"/></svg>Other tools</h2>
        <div class="others">
          <div><button class="tile" aria-label="Clocks tool"><svg><use href="#bigwave"/></svg></button><input class="switch" type="checkbox" role="switch" checked aria-label="Clocks enabled"></div>
          <div><button class="tile" aria-label="Peripherals tool"><svg><use href="#bigusb"/></svg></button><input class="switch" type="checkbox" role="switch" checked aria-label="Peripherals enabled"></div>
        </div></div>
    </div>
  </section>

  <section class="panel routing">
    <div class="tabs">
      <button class="tab active"><svg class="i"><use href="#route"/></svg>Routing Details</button><svg class="curve"><use href="#curve"/></svg>
      <span class="tools"><button aria-label="Legend"><svg class="i"><use href="#note"/></svg></button><button aria-label="Minimize"><svg class="i"><use href="#min"/></svg></button><button aria-label="Maximize"><svg class="i"><use href="#max"/></svg></button></span>
    </div>
    <div class="body">
      <div class="filterbar"><button class="pill">Pins</button><button class="pill">Signals</button>
        <label class="filter"><svg><use href="#lens"/></svg><input type="text" placeholder="type filter text" aria-label="Filter routing"></label></div>
      <div class="frame">
        <div class="caption"><h2>Routing Details for PortContai...</h2><input class="count" type="text" value="1" aria-label="Row count"><button aria-label="Add row"><svg class="i"><use href="#addb"/></svg></button><button aria-label="Delete row"><svg class="i"><use href="#delb"/></svg></button><button aria-label="Move up"><svg class="i"><use href="#upb"/></svg></button><button aria-label="Move down"><svg class="i"><use href="#downb"/></svg></button></div>
        <div class="clip routes">
          <table class="grid">
            <colgroup><col class="c40"><col class="c80"><col class="c80"><col class="c46"><col class="c108"><col class="c80"><col class="c80"><col class="c85"><col class="c113"><col class="c80"><col class="c86"><col class="c100"><col class="c137"><col class="c115"><col class="c125"><col class="c85"></colgroup>
            <thead><tr><th>#</th><th>Peripheral</th><th>Signal</th><th>Arrow</th><th>Routed pin/signal</th><th>Label</th><th>Identifier</th><th>Direction</th><th>Safe Mode Control</th><th>Pull Select</th><th>Pullup Enable</th><th>Pad keep enable</th><th>Output Inversion Select</th><th>Input Buffer Enable</th><th>Output Buffer Enable</th><th>Initial V</th></tr></thead>
            <tbody id="routes"><tr><td class="sel">A13</td><td>SIUL2</td><td>gpio, 0</td><td>&lt;-&gt;</td><td class="mark">[A13] PTA0</td><td>TEST</td><td>TEST</td><td>Input/Output</td><td><em>Disable</em></td><td><em>Pulldown</em></td><td><em>Disabled</em></td><td><em>Disabled</em></td><td><em>Don't invert</em></td><td><em>Enabled</em></td><td><em>Enabled</em></td><td><em>Low</em></td></tr></tbody>
          </table>
        </div>
      </div>
    </div>
  </section>

  <section class="panel problems">
    <div class="tabs"><button class="tab active"><svg class="i"><use href="#warn"/></svg>Problems<svg class="x"><use href="#x"/></svg></button><svg class="curve"><use href="#curve"/></svg></div>
    <div class="body">
      <label class="filter"><input type="text" placeholder="type filter text" aria-label="Filter problems"></label>
      <div class="clip"><table class="grid issues">
        <colgroup><col class="c100"><col class="c200"><col class="c85"></colgroup>
        <thead><tr><th class="sorted">Level<svg><use href="#sort"/></svg></th><th>Resource</th><th>Issue</th></tr></thead>
        <tbody id="issues"></tbody>
      </table></div>
    </div>
  </section>
</main>
<script src="app.js"></script>
</body>
</html>
```
FILE: styles.css
```css
* { box-sizing: border-box; }
body { margin: 0; height: 100vh; overflow: hidden; display: flex; flex-direction: column; background: #efefef; color: #000; font: 11px/16px "Noto Sans", "Open Sans", sans-serif; white-space: nowrap; }
button, input, select { font: inherit; color: inherit; margin: 0; }
button { border: 0; background: none; padding: 0; }
h1, h2, p, dl, dd, ul { margin: 0; padding: 0; font-size: 11px; }
svg { flex: none; display: block; }
.defs { position: absolute; width: 0; height: 0; }
.i { width: 16px; height: 16px; }

.titlebar { flex: none; height: 22px; display: flex; align-items: center; gap: 6px; background: #eef2fb; }
.titlebar h1 { font-weight: 400; font-size: 11px; }
.menubar { flex: none; height: 18px; display: flex; align-items: center; gap: 15px; padding-left: 5px; background: #fff; }

.toolbar { flex: none; height: 34px; display: flex; align-items: center; overflow: hidden; }
.toolbar > * { flex: none; }
.toolbar button { width: 23px; height: 23px; display: flex; align-items: center; justify-content: center; }
.toolbar .drop { width: 15px; }
.drop svg { width: 8px; height: 8px; }
.grip { width: 5px; height: 16px; background: repeating-linear-gradient(#b9b3a5 0 2px, transparent 2px 5px) 1px 0 / 2px 16px no-repeat; }
.sep { width: 6px; height: 18px; background: linear-gradient(#8c8c8c, #8c8c8c) 2px 0 / 1px 18px no-repeat; }
.toolbar .update { width: 106px; justify-content: flex-start; gap: 4px; padding-left: 7px; }
.combo { display: flex; align-items: center; height: 21px; background: #fff; border: 1px solid #a8a8ad; padding-right: 4px; }
.combo select { flex: 1; min-width: 0; appearance: none; border: 0; background: none; padding: 0 4px; outline: 0; text-overflow: clip; }
.combo svg { width: 10px; height: 10px; }
.config { width: 291px; margin: 0 6px 0 12px; }
.group { width: 196px; }
.group select { padding-right: 0; }
.grouplabel { width: 105px; }
.perspectives { height: 26px; justify-content: flex-end; padding-bottom: 2px; }
.perspectives .find { margin-right: 12px; }
.on { background: #cce8ff; outline: 1px solid #99d1ff; outline-offset: -1px; border-radius: 2px; }

.workbench { flex: 1; min-height: 0; display: grid; grid-template-columns: 714fr 713fr 335fr; grid-template-rows: 674fr 88fr 184fr; column-gap: 6px; row-gap: 4px; }
.panel { min-width: 0; min-height: 0; overflow: hidden; display: flex; flex-direction: column; border: 1px solid #a0a0a0; border-radius: 7px 7px 0 0; }
.pins { grid-area: 1 / 1; }
.package { grid-area: 1 / 2; }
.overview { grid-area: 1 / 3 / 3 / 4; border-right: 0; border-top-right-radius: 0; }
.routing { grid-area: 2 / 1 / 4 / 3; border-bottom: 0; }
.problems { grid-area: 3 / 3; border-right: 0; border-bottom: 0; border-top-right-radius: 0; }
.body { flex: 1; min-height: 0; display: flex; flex-direction: column; }
.tabs { flex: none; height: 24px; display: flex; border-bottom: 1px solid #a0a0a0; }
.tab { height: 23px; display: flex; align-items: center; gap: 4px; padding: 0 3px; color: #b4b4b4; border-right: 1px solid #a0a0a0; border-radius: 0 6px 0 0; }
.tab.active { background: #34393b; color: #e4e4e4; border: 0; border-radius: 0; padding: 0 0 0 3px; }
.tab .x { width: 12px; height: 12px; margin-left: 4px; }
.curve { width: 32px; height: 23px; margin-right: -10px; }
.tools { margin-left: auto; display: flex; align-items: center; padding-right: 5px; }
.tools button { width: 23px; height: 22px; display: flex; align-items: center; justify-content: center; }
.focused .tabs { border-bottom: 2px solid #26282a; height: 25px; }
.focused .body { border: 2px solid #26282a; border-top: 0; }

.filterbar { flex: none; display: flex; align-items: center; }
.filter { flex: 1; display: flex; align-items: center; gap: 2px; padding-left: 3px; background: #fff; border-bottom: 1px solid #868686; }
.filter svg { width: 12px; height: 12px; }
.filter input { flex: 1; min-width: 0; border: 0; outline: 0; background: none; padding: 0; }
.filter input::placeholder { color: #5c5c5c; opacity: 1; }
.pins .filterbar { padding: 5px 4px 6px 5px; }
.pins .filter { height: 21px; }
.set { display: flex; margin-right: 8px; }
.set.last { margin-right: 4px; }
.set button { width: 23px; height: 21px; display: flex; align-items: center; justify-content: center; }

.clip { flex: 1; min-width: 0; min-height: 0; overflow: hidden; background: #fff; }
.pinlist { flex: 1; min-height: 0; display: flex; margin-left: 5px; }
.vbar { width: 20px; background: linear-gradient(#868686, #868686) 8px 17px / 2px 63px no-repeat; }
.hbar { flex: none; height: 22px; background: linear-gradient(#868686, #868686) 162px 8px / 113px 2px no-repeat; }
.grid { table-layout: fixed; width: 0; border-collapse: separate; border-spacing: 0; }
.grid th { height: 24px; padding: 0 5px 0 6px; font-weight: 400; text-align: left; border-right: 1px solid #e3e3e3; }
.grid td { height: 19px; line-height: 18px; padding: 0 0 0 6px; overflow: hidden; border-right: 1px solid #efefef; border-bottom: 1px solid #efefef; }
.pintable td:first-child { padding-left: 4px; }
.pintable td:nth-child(2) { color: #868686; }
.pincell { display: flex; align-items: center; gap: 2px; height: 18px; }
.pincell input { appearance: none; flex: none; width: 16px; height: 16px; border: 1px solid #a0a0a0; background: #f2f2f2; }
.pincell input:disabled { border-color: #666; background: linear-gradient(45deg, transparent 47%, #111 47% 53%, transparent 53%), linear-gradient(-45deg, transparent 47%, #111 47% 53%, transparent 53%), #fff; }
.c40 { width: 40px; } .c46 { width: 46px; } .c49 { width: 49px; } .c70 { width: 70px; } .c71 { width: 71px; } .c80 { width: 80px; } .c85 { width: 85px; } .c86 { width: 86px; } .c90 { width: 90px; }
.c100 { width: 100px; } .c103 { width: 103px; } .c108 { width: 108px; } .c109 { width: 109px; } .c110 { width: 110px; } .c113 { width: 113px; } .c115 { width: 115px; } .c125 { width: 125px; } .c137 { width: 137px; } .c200 { width: 200px; }

.bga { flex: 1; min-height: 0; width: 100%; font-family: "Liberation Sans", Arial, sans-serif; text-anchor: middle; }
.bga .lead { stroke: #000; shape-rendering: crispEdges; }
.bga .axis { font-size: 6px; fill: #333; }
.bga .name { font-size: 6px; fill: #1c1c1c; }
.bga .title { font-size: 16px; }

.overview .body { margin: 2px 0 2px 1px; padding: 4px 0 0 10px; background: #fff; gap: 2px; overflow: hidden; }
.card { flex: none; background: #efefef; }
.card.apart { margin-top: 8px; }
.card h2 { height: 27px; display: flex; align-items: center; gap: 12px; padding-left: 8px; font-weight: 700; }
.card h2 svg { width: 12px; height: 12px; }
.card dl { display: grid; grid-template-columns: 90px auto; column-gap: 8px; line-height: 20px; padding: 1px 0 4px; }
.card dt { text-align: right; }
.pinstool { display: flex; gap: 6px; padding: 4px 0 8px 19px; }
.tile { flex: none; width: 90px; height: 88px; display: flex; align-items: center; justify-content: center; background: #fdfdfd; border: 1px solid #ccc; border-radius: 4px; }
.tile svg { width: 84px; height: 84px; }
.about { display: flex; flex-direction: column; justify-content: space-between; padding-bottom: 2px; line-height: 13px; }
.switch { appearance: none; display: block; width: 32px; height: 16px; border-radius: 8px; background: radial-gradient(circle at 24px 8px, #fff 5px, #00bf0a 6px); margin-left: 2px; }
.enabled { display: flex; align-items: center; gap: 4px; padding-left: 18px; height: 21px; }
.enabled input { appearance: none; width: 13px; height: 13px; border-radius: 3px; background: #005fb8; display: grid; place-items: center; }
.enabled input::before { content: ""; width: 7px; height: 4px; border: solid #fff; border-width: 0 0 1px 1px; rotate: -45deg; margin-bottom: 2px; }
.files { list-style: none; padding-bottom: 5px; }
.files li { height: 27px; display: flex; align-items: center; gap: 12px; padding-left: 21px; }
.files a { color: #0a5fc4; text-decoration: none; }
.others { display: flex; gap: 15px; padding: 3px 0 9px 12px; }
.others .tile { margin-bottom: 6px; }

.routing .filterbar { height: 34px; padding: 6px 7px 4px 8px; }
.routing .filter { height: 24px; }
.pill { height: 22px; padding: 0 4px; border: 1px solid #00569f; border-radius: 4px; background: #cce4f7; margin-right: 7px; }
.frame { flex: 1; min-height: 0; display: flex; flex-direction: column; margin: 0 7px; padding: 6px 5px 0 6px; background: #fff; border: 1px solid #a0a0a5; border-bottom: 0; }
.caption { flex: none; height: 26px; display: flex; align-items: center; background: #b9cfe9; padding-left: 4px; }
.caption h2 { width: 210px; font-weight: 400; }
.count { width: 36px; height: 22px; border: 0; border-bottom: 1px solid #868686; background: #fff; text-align: center; margin-right: 7px; padding: 0; }
.caption button { width: 19px; height: 20px; display: flex; align-items: center; justify-content: center; border: 1px solid #e8f0f8; border-radius: 3px; background: #c5d7ec; margin-right: 8px; }
.routes { border: solid #b9cfe9; border-width: 0 1px; padding-left: 1px; }
.routes em { font-style: italic; }
.sel { background: #0078d7; }
.grid td.mark { position: relative; overflow: visible; }
.mark::after { content: ""; position: absolute; left: 5px; top: 17px; width: 251px; height: 2px; background: #e30b0b; box-shadow: 1px 5px 4px rgba(0, 0, 0, .3); }

.problems .filter { flex: none; height: 20px; margin: 6px 0 5px 7px; padding-left: 5px; }
.problems .clip { margin-left: 6px; }
.issues td { height: 18px; line-height: 16px; border-color: #e0e0e0; }
.issues td:first-child { background: #f6f6f6; }
.grid .sorted { position: relative; }
.sorted svg { position: absolute; left: 47px; top: 1px; width: 8px; height: 4px; }
```
FILE: app.js
```js
// Pin | pin name | SIUL2 | eMIOS instance | FXIO | LPSPI instance
const pins = `A1|PTG10|gpio,202[...]|||
B1|PTA18|gpio,18[...]|1||1
C1|PTA19|gpio,19[...]|1||1
D1|PTA21|gpio,21[...]|1|d0|2
E1|PTE11|gpio,139[...]|0|d5|2
F1|PTE13|gpio,141[...]|1|d5|2
G1|PTA24|gpi,24|1|d3_i|
H1|PTA25|gpi,25[...]|1|d2_i|
J1|VSS246||||
K1|EXTAL||||
L1|XTAL||||
M1|PTE12|gpio,140[...]|1|d8|
N1|PTE3|gpio,131[...]|0|d6|
P1|PTA31|gpio,31|1|d0|0
R1|PTB18|gpio,50|1|d1|1
T1|PTB20|gpio,52|1|d3|
U1|PTB21|gpio,53[...]|1|d4|
A2|PTA8|gpio,8[...]|1|d6|2
B2|VSS240||||
C2|PTE16|gpio,144[...]|0|d3|2
D2|PTE15|gpio,143[...]|0|d2|2
E2|PTE10|gpio,138[...]|0|d4|3
F2|PTE5|gpio,133[...]|1|d7|
G2|PTG9|gpio,201[...]|||
H2|PTG1|gpio,193[...]|1||
J2|PTG0|gpio,192[...]|1||
K2|PTG3|gpio,195[...]|1||
L2|PTA26|gpio,26|1|d1|1
M2|PTA27|gpio,27|1|d5|
N2|PTA28|gpio,28[...]|1||1`.split("\n").map(r => r.split("|"));

document.getElementById("pins").innerHTML = pins.map(([pin, name, siul, emios, fxio, spi]) =>
  `<tr><td><label class="pincell"><input type="checkbox"${siul ? "" : " disabled"}>${pin}</label></td><td>${name}</td><td></td><td></td>` +
  `<td>${siul && "SIUL2:" + siul}</td><td>${emios && `eMIOS_${emios}:emios_...`}</td><td>${fxio && "FXIO:fxio_" + fxio}</td><td>${spi && `LPSPI${spi}:lpspi${spi}_`}</td></tr>`).join("");

const blank = (rows, cols) => ("<tr>" + "<td></td>".repeat(cols) + "</tr>").repeat(rows);
document.getElementById("routes").insertAdjacentHTML("beforeend", blank(8, 16));
document.getElementById("issues").innerHTML = blank(6, 3);

// Ball grid of the package, seen from below: column 17 at the left, column 1 at the right
const rows = "ABCDEFGHJKLMNPRTU";
const dedicated = new Set("B16 B2 D14 D9 D4 G11 G10 G7 H10 H9 H8 H7 H6 J14 J10 J9 J8 J7 J6 J4 J1 K11 K10 K9 K8 K1 L11 L8 L7 L1 N4 P14 P4 R10 R7 T16 T10 T7 T2".split(" "));
const pitch = 377 / 16;
const X = col => 166 + Math.round((17 - col) * pitch);
const Y = row => 134 + Math.round(row * pitch);
const text = (cls, x, y, s) => `<text class="${cls}" x="${x}" y="${y}">${s}</text>`;
const lead = (x1, y1, x2, y2) => `<line class="lead" x1="${x1}" y1="${y1}" x2="${x2}" y2="${y2}"/>`;
let art = '<rect x="146" y="113" width="421" height="422" rx="4" fill="#808080"/>' +
  '<path d="M147 533V116l3-3h413" fill="none" stroke="#b8b8b8"/><path d="M566 117v414l-3 3H150" fill="none" stroke="#5c5c5c"/>' +
  '<circle cx="558" cy="123" r="5" fill="#008f94" stroke="#c8c8c8"/>';
for (let col = 17; col >= 1; col--) {
  art += text("axis", X(col), 66, col) + lead(X(col), 82, X(col), 98) + lead(X(col), 550, X(col), 566) + text("axis", X(col), 585, col);
}
[...rows].forEach((letter, r) => {
  const y = Y(r);
  art += text("axis", 96, y, letter) + lead(114, y, 130, y) + lead(582, y, 598, y) + text("axis", 615, y, letter);
  for (let col = 17; col >= 1; col--) {
    const hollow = r === 4 || r === 12 ? col > 4 && col < 14 : r > 4 && r < 12 && (col === 5 || col === 13);
    if (hollow) continue;
    const id = letter + col, x = X(col);
    art += `<rect x="${x - 4}" y="${y - 4}" width="8" height="8" fill="${id === "A13" ? "#0f0" : "#e0e0e0"}"/>`;
    if (dedicated.has(id)) art += `<path d="M${x - 4} ${y - 4}l8 8m0-8l-8 8" stroke="#000"/>`;
    art += text("name", x, y + 10, id);
  }
});
art += text("title", 356, 603, "S32K344_257BGA - BGA 257 package");
document.getElementById("bga").innerHTML = art;
```
